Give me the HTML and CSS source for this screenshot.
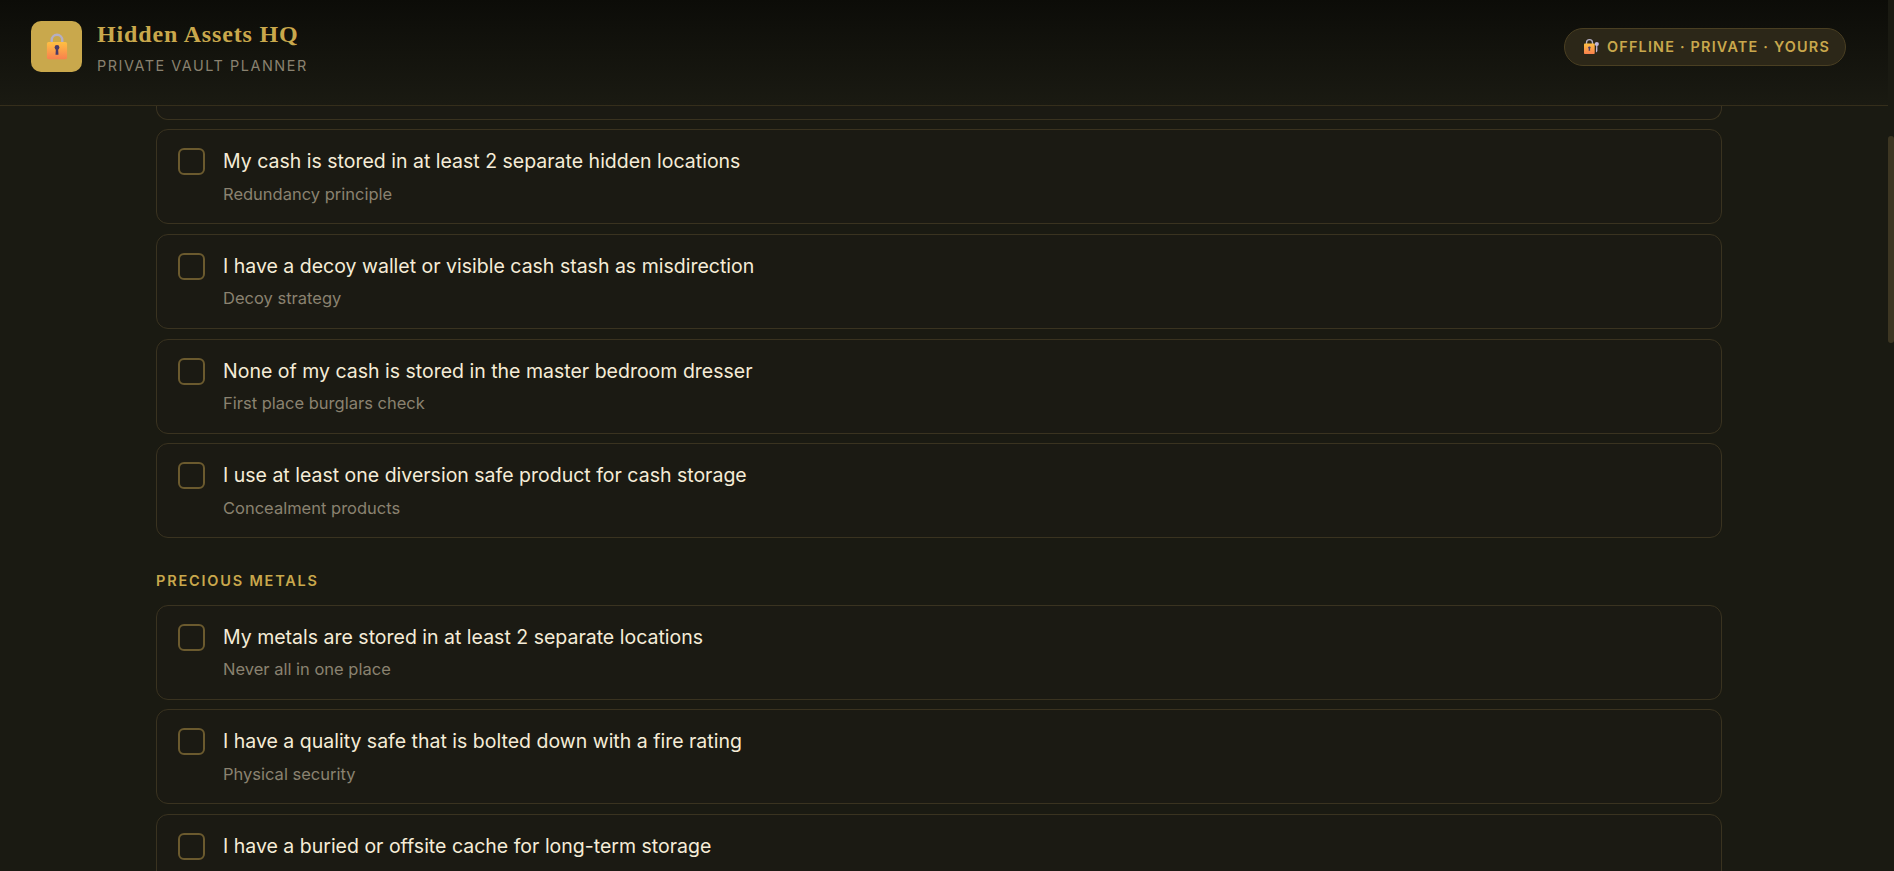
FILE: index.html
```html
<!DOCTYPE html>
<html lang="en">
<head>
<meta charset="utf-8">
<title>Hidden Assets HQ</title>
<link rel="stylesheet" href="styles.css">
</head>
<body>
<div class="page">
  <header class="topbar">
    <div class="brand">
      <div class="logo">
        <svg class="lock-icon" viewBox="0 0 24 28" aria-hidden="true">
          <defs>
            <linearGradient id="lockFill" x1="0" y1="0" x2="0" y2="1">
              <stop offset="0" stop-color="#ffc042"/>
              <stop offset="1" stop-color="#f8804e"/>
            </linearGradient>
          </defs>
          <path d="M6.25 10V7a5.75 5.75 0 0 1 11.5 0v3" fill="none" stroke="#b4aec4" stroke-width="2.6"/>
          <rect x="1" y="9" width="22" height="19" rx="2" fill="url(#lockFill)"/>
          <circle cx="12" cy="15" r="2.6" fill="#4a3a68"/>
          <path d="M10.9 15h2.2l.5 8h-3.2z" fill="#4a3a68"/>
        </svg>
      </div>
      <div class="brand-text">
        <h1 class="brand-title">Hidden Assets HQ</h1>
        <p class="brand-sub">PRIVATE VAULT PLANNER</p>
      </div>
    </div>
    <div class="pill">
      <svg class="pill-icon" viewBox="0 0 15 15" aria-hidden="true">
        <defs>
          <linearGradient id="pillFill" x1="0" y1="0" x2="0" y2="1">
            <stop offset="0" stop-color="#ffc042"/>
            <stop offset="1" stop-color="#f8804e"/>
          </linearGradient>
        </defs>
        <circle cx="12.8" cy="5" r="2.1" fill="#c0b6d6"/>
        <path d="M12.2 6h1.2v6l-1 1.5-.5-1z" fill="#c0b6d6"/>
        <path d="M2.5 5.5V3.7a3 3 0 0 1 6 0v1.8" fill="none" stroke="#b4aec4" stroke-width="1.3"/>
        <rect x="0" y="4.5" width="10.7" height="10.5" rx="0.8" fill="url(#pillFill)"/>
        <circle cx="5.4" cy="8.6" r="1.2" fill="#4a3a68"/>
        <path d="M4.9 8.6h1l.3 3.2H4.6z" fill="#4a3a68"/>
      </svg>
      <span>OFFLINE · PRIVATE · YOURS</span>
    </div>
  </header>

  <main class="content">
    <div class="column">
      <article class="card card-clipped"></article>
      <article class="card">
        <span class="check"></span>
        <div class="card-text"><p class="card-title">My cash is stored in at least 2 separate hidden locations</p><p class="card-sub">Redundancy principle</p></div>
      </article>
      <article class="card">
        <span class="check"></span>
        <div class="card-text"><p class="card-title">I have a decoy wallet or visible cash stash as misdirection</p><p class="card-sub">Decoy strategy</p></div>
      </article>
      <article class="card">
        <span class="check"></span>
        <div class="card-text"><p class="card-title">None of my cash is stored in the master bedroom dresser</p><p class="card-sub">First place burglars check</p></div>
      </article>
      <article class="card">
        <span class="check"></span>
        <div class="card-text"><p class="card-title">I use at least one diversion safe product for cash storage</p><p class="card-sub">Concealment products</p></div>
      </article>

      <h2 class="section-label">PRECIOUS METALS</h2>

      <article class="card">
        <span class="check"></span>
        <div class="card-text"><p class="card-title">My metals are stored in at least 2 separate locations</p><p class="card-sub">Never all in one place</p></div>
      </article>
      <article class="card">
        <span class="check"></span>
        <div class="card-text"><p class="card-title">I have a quality safe that is bolted down with a fire rating</p><p class="card-sub">Physical security</p></div>
      </article>
      <article class="card">
        <span class="check"></span>
        <div class="card-text"><p class="card-title">I have a buried or offsite cache for long-term storage</p></div>
      </article>
    </div>
  </main>
  <div class="scrollbar"><div class="scroll-thumb"></div></div>
</div>
</body>
</html>
```
FILE: styles.css
```css
* { box-sizing: border-box; }
html, body { margin: 0; height: 100%; overflow: hidden; background: #1a1a12; }
body { font-family: Inter, "Liberation Sans", sans-serif; color: #f5ecd7; }
p, h1, h2 { margin: 0; }

.page {
  display: grid;
  grid-template-columns: 1fr 6px;
  grid-template-rows: 106px 1fr;
  height: 871px;
  overflow: hidden;
}

.topbar {
  grid-column: 1;
  grid-row: 1;
  display: flex;
  align-items: center;
  justify-content: space-between;
  padding: 0 42px 12px 31px;
  background: linear-gradient(180deg, #0c0c08 0%, #1a1a12 100%);
  border-bottom: 1px solid #352e1b;
}
.brand { display: flex; align-items: center; gap: 15px; }
.logo {
  width: 51px;
  height: 51px;
  border-radius: 10px;
  background: #c9a84c;
  display: flex;
  align-items: center;
  justify-content: center;
}
.lock-icon { width: 22px; height: 27px; }
.brand-text { padding-top: 2px; }
.brand-title {
  font-family: "Liberation Serif", serif;
  font-weight: 700;
  font-size: 24px;
  line-height: 30px;
  color: #c9a84c;
  letter-spacing: 0.85px;
}
.brand-sub {
  font-size: 14.4px;
  line-height: 20px;
  margin-top: 7px;
  letter-spacing: 1.55px;
  color: #8a8270;
}

.pill {
  display: flex;
  align-items: center;
  gap: 8px;
  height: 38px;
  padding: 0 15px 0 19px;
  border: 1px solid #4a3f22;
  border-radius: 19px;
  background: #2c2718;
  color: #c9a84c;
  font-size: 14.4px;
  font-weight: 600;
  letter-spacing: 1.2px;
}
.pill-icon { width: 15px; height: 15px; }

.content {
  grid-column: 1;
  grid-row: 2;
  overflow: hidden;
  display: flex;
  justify-content: center;
  padding-right: 10px;
}
.column { width: 1566px; display: flex; flex-direction: column; gap: 9.7px; }

.card {
  flex: none;
  display: flex;
  align-items: flex-start;
  gap: 18px;
  height: 95px;
  padding: 18px 21px;
  border: 1px solid #3a3320;
  border-radius: 12px;
  background: #1b1a13;
}
.card-clipped { height: 13.6px; padding: 0; border-top: 0; border-radius: 0 0 12px 12px; }
.check {
  flex: none;
  width: 27px;
  height: 27px;
  border: 2px solid #6b5a2e;
  border-radius: 6px;
}
.card-title { font-size: 19.5px; line-height: 27.5px; color: #f5ecd7; }
.card-sub { font-size: 16.5px; line-height: 22px; margin-top: 7px; color: #8a8270; }

.section-label {
  font-size: 14.5px;
  font-weight: 600;
  line-height: 20px;
  letter-spacing: 1.8px;
  color: #c9a84c;
  margin: 23px 0 4px;
}

.scrollbar { grid-column: 2; grid-row: 1 / span 2; background: #1a1a12; padding-top: 136px; }
.scroll-thumb { height: 207px; background: #3d3622; border-radius: 3px; }
```
